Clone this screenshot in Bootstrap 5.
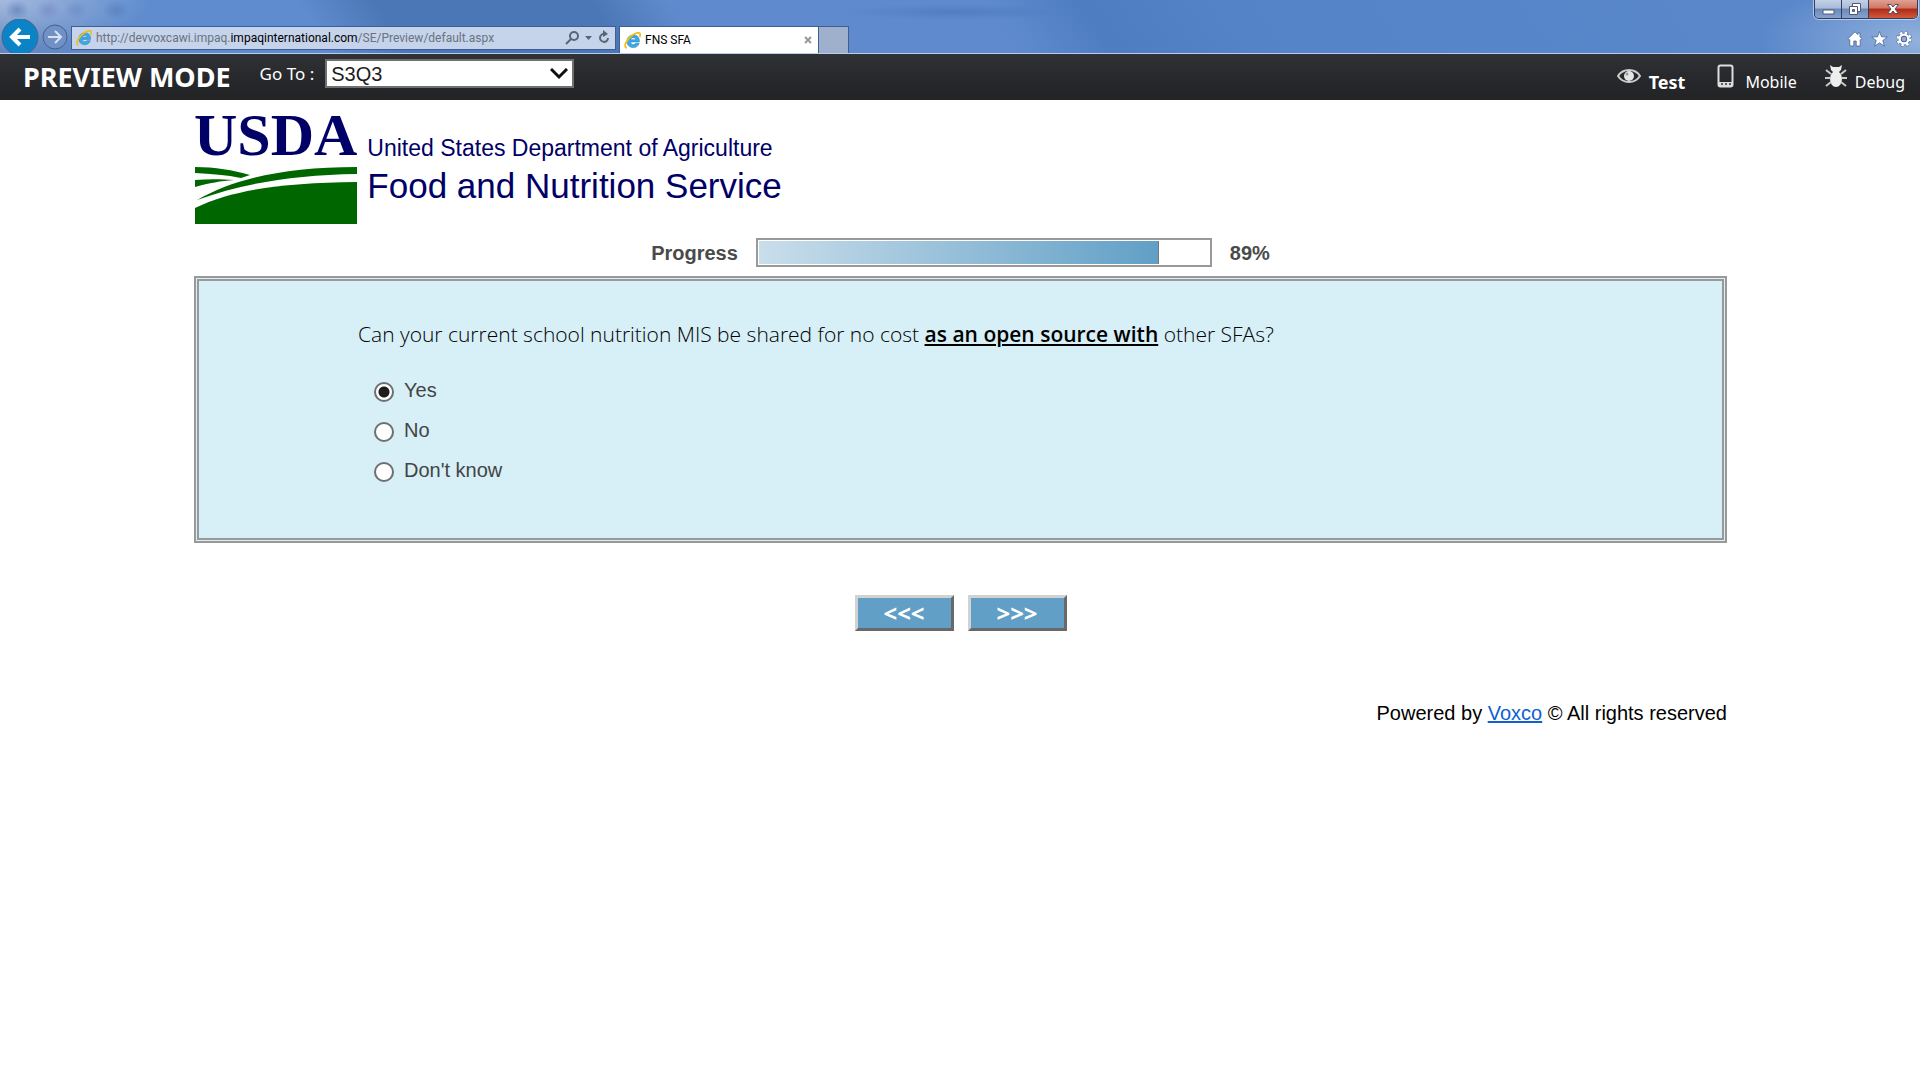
<!DOCTYPE html>
<html lang="en">
<head>
<meta charset="utf-8">
<meta name="viewport" content="width=device-width, initial-scale=1">
<title>FNS SFA</title>
<link rel="stylesheet" href="https://cdn.jsdelivr.net/npm/bootstrap@5.3.0/dist/css/bootstrap.min.css">
<style>
  body { font-family: "Liberation Sans", Arial, sans-serif; font-size: 20px; line-height: 24px; color: #000; background: #fff; }
  svg { display: block; flex: none; }

  /* browser frame */
  .glass { height: 54px; border-bottom: 1px solid #b9cdf0; font-family: Roboto, "Open Sans", sans-serif; font-size: 12px; line-height: 16px;
    background:
      radial-gradient(ellipse 110px 8px at 955px 12px, rgba(58,98,170,.35), transparent),
      radial-gradient(ellipse 12px 10px at 17px 10px, rgba(80,115,180,.55), transparent),
      radial-gradient(ellipse 12px 10px at 48px 10px, rgba(110,120,190,.45), transparent),
      radial-gradient(ellipse 12px 10px at 76px 10px, rgba(90,125,185,.4), transparent),
      radial-gradient(ellipse 14px 10px at 116px 10px, rgba(80,115,180,.5), transparent),
      radial-gradient(ellipse 160px 60px at 100% 40px, rgba(185,205,232,.6), transparent),
      radial-gradient(ellipse 150px 50px at 0 0, rgba(200,213,236,.65), transparent),
      linear-gradient(55deg, #6486bd 0, #5f8ccf 8%, #5f8ccf 17%, #4c77b6 21%, #4c77b6 32%, #5f8bce 36%, #5f8bce 52%, #4f7dc2 57%, #5684c8 66%, #5a88cb 100%); }
  .navcircles { width: 71px; height: 34px; }
  .addressbar { width: 545px; height: 24px; margin-bottom: 3px; padding: 0 4px; border: 1px solid #3f5f94; background: #c5d3eb; color: #6b7280; }
  .addressbar b { font-weight: 400; color: #000; }
  .chrometab { width: 200px; height: 27px; margin-left: 3px; border: 1px solid #3f5f94; border-bottom: 0; background: #fff; color: #000; }
  .newtab { width: 30px; height: 27px; border: 1px solid #3f5f94; border-left: 0; border-bottom: 0; background: #9fb0cc; }
  .plainbtn { border: 0; padding: 0; background: none; }
  .winbtns { height: 19px; margin-right: 2px; border: 1px solid #2d3f63; border-top: 0; border-radius: 0 0 5px 5px; overflow: hidden; box-shadow: 0 0 0 1px rgba(255,255,255,.5); }
  .winbtns button { border: 0; padding: 0; height: 18px; width: 27px; background: linear-gradient(#c3d0e6 0, #a9bbd9 45%, #6b88b8 50%, #86a3cf 100%); border-right: 1px solid #2d3f63; display: flex; align-items: center; justify-content: center; }
  .winbtns .shut { width: 48px; border-right: 0; background: linear-gradient(#dfa193 0, #cf7564 45%, #b02a14 50%, #cf5b3c 100%); }

  /* preview toolbar */
  .previewbar { height: 46px; padding: 0 15px 0 23px; background: linear-gradient(#303236, #26272a 60%, #232426); color: #fff; font-family: "Noto Sans", sans-serif; font-size: 17px; }
  .previewbar h1 { font-size: 27px; line-height: 30px; font-weight: 700; }
  .previewbar a { color: #fff; text-decoration: none; font-size: 16px; }
  .previewbar a.fw-bold { font-size: 18px; }
  .goto { gap: 11px; padding: 5px 0 0 5px; }
  .gotobox { width: 249px; height: 29px; padding: 0 4px; border: 2px solid #707070; border-radius: 0; color: #1c1c1c;
    font: 20px/24px "Liberation Sans", sans-serif; background: #fff url("data:image/svg+xml,%3Csvg xmlns='http://www.w3.org/2000/svg' viewBox='0 0 18 12'%3E%3Cpath d='M1 1l8 8 8-8' fill='none' stroke='%23111' stroke-width='3'/%3E%3C/svg%3E") no-repeat right 4px center / 18px 12px; }

  /* survey */
  .survey { width: 80%; padding: 0 1px 0 2px; }
  .usda { color: #000066; font-family: "Liberation Serif", serif; font-weight: 700; font-size: 60px; line-height: 54px; padding-bottom: 4px; }
  .agency { color: #000066; padding: 24px 0 0 10px; }
  .agency .dept { font-size: 23px; line-height: 32px; }
  .agency .service { font-size: 35px; line-height: 44px; }
  .meterline { gap: 18px; font-weight: 700; color: #4a4a4a; margin: 14px 0 9px; }
  .meter { width: 456px; height: 29px; padding: 1px; border: 2px solid #999; border-radius: 0; background: #fff; }
  .meter .progress-bar { background: linear-gradient(90deg, #c9deeb, #619fc6); border-right: 1px solid #777; }
  .question { border: 5px double #999; background: #d7eff6; padding: 37px 159px 40px; }
  .question legend { margin-bottom: 28px; font-family: "Open Sans", sans-serif; font-weight: 300; font-size: 21px; line-height: 32px; }
  .question legend u { font-weight: 600; }
  .choice { min-height: 40px; gap: 10px; color: #444; }
  .choice input { appearance: none; width: 20px; height: 20px; margin: 4px 0 0; border: 2px solid #6e6e6e; border-radius: 50%; background: #fff; }
  .choice input:checked { background: radial-gradient(circle, #1c1c1c 0 5px, #fff 6px); }
  .steps { gap: 14px; }
  .stepbtn { width: 99px; height: 36px; padding: 0; border: 3px solid; border-color: #d2d2d2 #696969 #696969 #d2d2d2; background: #629fc6; color: #fff; font: 700 24px/24px "Noto Sans", sans-serif; }
  .credit { margin-top: 70px; }
  .credit a { color: #0b62d0; }
</style>
<script src="https://cdn.jsdelivr.net/npm/bootstrap@5.3.0/dist/js/bootstrap.bundle.min.js"></script>
</head>
<body>
<svg width="0" height="0" class="position-absolute" aria-hidden="true">
  <symbol id="ie" viewBox="0 0 16 16">
    <path d="M14.500 9.400H6.200c.1 1.500 1.100 2.400 2.700 2.400 1 0 1.700-.4 2.100-1.100h3.300c-.8 2.500-2.800 4-5.500 4-3.600 0-6-2.300-6-5.900 0-3.500 2.500-6 6-6 3.800 0 6 2.500 5.700 6.600zM6.200 7.300h5c-.1-1.200-1-2-2.400-2s-2.400.8-2.600 2z" fill="#3fa9e2" stroke="#1c7fc0" stroke-width=".5"/>
    <path d="M2.500 15.200C-.9 13.600 2.600 6.800 7.500 3.300c3.600-2.700 6.900-3.200 7.600-1.600.4.900.1 2-.4 3" fill="none" stroke="#f3bd1a" stroke-width="1.700"/>
  </symbol>
</svg>

<header class="glass d-flex align-items-end">
  <div class="navcircles">
    <svg width="71" height="34" viewBox="0 0 71 34" role="img" aria-label="Back and forward">
      <circle cx="20" cy="18" r="18" fill="#0a84c6" stroke="#44638f"/>
      <path d="M30 18H12m8-8l-8 8 8 8" fill="none" stroke="#fff" stroke-width="4"/>
      <circle cx="55" cy="18" r="12" fill="#7090c6" stroke="#44608f" stroke-width="1"/>
      <path d="M48 18h13m-6-6l6 6-6 6" fill="none" stroke="#d8e2f2" stroke-width="2"/>
    </svg>
  </div>
  <div class="addressbar d-flex align-items-center">
    <svg width="16" height="16"><use href="#ie"/></svg>
    <div class="flex-grow-1 ps-1 text-nowrap" role="textbox" aria-label="Address">http://devvoxcawi.impaq.<b>impaqinternational.com</b>/SE/Preview/default.aspx</div>
    <svg width="46" height="16" viewBox="0 0 46 16" fill="none" stroke="#5a6475" stroke-width="2">
      <circle cx="9" cy="6" r="4"/><path d="M6 9l-5 5"/><path d="M20 6h7l-3.500 4z" fill="#5a6475" stroke="none"/>
      <path d="M43 8a4 4 0 1 1-3-4"/><path d="M38 0l5 4-5 3z" fill="#5a6475" stroke="none"/>
    </svg>
  </div>
  <div class="chrometab d-flex align-items-center ps-1 pe-1">
    <svg width="17" height="17"><use href="#ie"/></svg>
    <span class="ps-1 flex-grow-1">FNS SFA</span>
    <button class="plainbtn" aria-label="Close tab"><svg width="12" height="12" viewBox="0 0 12 12" stroke="#999" stroke-width="2"><path d="M3 3l6 6M9 3l-6 6"/></svg></button>
  </div>
  <div class="newtab"></div>
  <div class="ms-auto align-self-start d-flex flex-column align-items-end">
    <div class="winbtns d-flex">
      <button aria-label="Minimize"><svg width="13" height="12" viewBox="0 0 13 12"><path d="M1 7h11v4H1z" fill="#fff" stroke="#4c5a78"/></svg></button>
      <button aria-label="Restore"><svg width="14" height="14" viewBox="0 0 14 14" fill="#fff" stroke="#4c5a78"><path d="M4.500 1.500h8v8h-8z"/><path d="M1.500 4.500h8v8h-8z"/><path d="M4.500 7.500h2v2h-2z" fill="#6b88b8"/></svg></button>
      <button class="shut" aria-label="Close"><svg width="14" height="12" viewBox="0 0 14 12"><path d="M1.500 1.500h3.500l2 2.500 2-2.500h3.500L9 6l3.500 4.500H9L7 8l-2 2.500H1.500L5 6z" fill="#fff" stroke="#5a4a58"/></svg></button>
    </div>
    <div class="d-flex gap-2 pt-2 me-2 mt-1">
      <button class="plainbtn" aria-label="Home"><svg width="16" height="16" viewBox="0 0 16 16"><path d="M8 .8L.8 8l1.200 1.200.8-.6V15h4v-5h2.400v5h4V8.600l.8.600L15.200 8 13 5.800V2h-2.200v1.600z" fill="#fff" stroke="#4a6596" stroke-width=".8"/></svg></button>
      <button class="plainbtn" aria-label="Favorites"><svg width="17" height="16" viewBox="0 0 17 16"><path d="M8.500.5l2 5.300 5.800.2-4.500 3.500 1.600 5.600-4.900-3.200-4.900 3.200 1.600-5.600L.7 6l5.800-.2z" fill="#fff" stroke="#4a6596" stroke-width=".8"/></svg></button>
      <button class="plainbtn" aria-label="Tools"><svg width="16" height="16" viewBox="0 0 16 16" fill="none"><circle cx="8" cy="8" r="6.300" stroke="#4a6596" stroke-width="3.400" stroke-dasharray="2.800 2.150"/><circle cx="8" cy="8" r="4.300" stroke="#4a6596" stroke-width="4"/><circle cx="8" cy="8" r="6.300" stroke="#fff" stroke-width="2.400" stroke-dasharray="2.400 2.550"/><circle cx="8" cy="8" r="4.400" stroke="#fff" stroke-width="2.400"/></svg></button>
    </div>
  </div>
</header>

<nav class="previewbar d-flex align-items-start">
  <h1 class="m-0 pt-2">PREVIEW MODE</h1>
  <div class="goto d-flex align-items-center ms-4">
    <label for="goto" class="text-nowrap">Go To :</label>
    <select id="goto" class="form-select gotobox"><option>S3Q3</option></select>
  </div>
  <div class="d-flex ms-auto pt-2 gap-4">
    <a href="#" class="d-flex align-items-start gap-2 fw-bold">
      <svg width="24" height="24" viewBox="0 0 24 24"><path d="M1 14c5-8 17-8 22 0-5 8-17 8-22 0z" fill="none" stroke="#ccc" stroke-width="2"/><circle cx="12" cy="14" r="5" fill="#e4e4e4"/><circle cx="10" cy="12" r="1.500" fill="#999"/></svg><span class="pt-2">Test</span></a>
    <a href="#" class="d-flex align-items-start gap-2 ms-2">
      <svg width="20" height="26" viewBox="0 0 20 26"><rect x="1.500" y="3.500" width="14" height="21" rx="2" fill="none" stroke="#ddd" stroke-width="2"/><path d="M2 20h13v4H2z" fill="#ddd"/><path d="M4 22h2m2 0h2m2 0h2" stroke="#333" stroke-width="1.500"/></svg><span class="pt-2">Mobile</span></a>
    <a href="#" class="d-flex align-items-start gap-2 ms-1">
      <svg width="22" height="26" viewBox="0 0 22 26"><path d="M6 8l-1-5 3 2h6l3-2-1 5-2 2H8z" fill="#eee"/><ellipse cx="11" cy="17" rx="6" ry="8" fill="#eee"/><path d="M6 12L1 8m15 4l5-4M6 16H0m16 0h6M6 20l-5 4m15-4l5 4" stroke="#ccc" stroke-width="2" fill="none"/></svg><span class="pt-2">Debug</span></a>
  </div>
</nav>

<main class="survey mx-auto">
  <div class="d-flex pt-2">
    <div>
      <div class="usda">USDA</div>
      <svg width="163" height="58" viewBox="0 0 163 58" aria-hidden="true">
        <g fill="#006600"><path d="M1 1c20 0 38 3 55 8l-9 3C33 9 17 8 1 7z"/><path d="M1 14c13-1 25-1 39 0-14 1-24 3-39 7z"/><path d="M3 34C40 13 90 1 163 1v7C100 9 50 17 3 34z"/><path d="M1 42C40 23 90 17 163 16v42H1z"/></g>
      </svg>
    </div>
    <div class="agency">
      <div class="dept">United States Department of Agriculture</div>
      <div class="service">Food and Nutrition Service</div>
    </div>
  </div>

  <div class="meterline d-flex justify-content-center align-items-center">
    <span>Progress</span>
    <div class="progress meter" role="progressbar" aria-label="Progress" aria-valuenow="89" aria-valuemin="0" aria-valuemax="100"><div class="progress-bar" style="width:89%"></div></div>
    <span>89%</span>
  </div>

  <form>
    <fieldset class="question">
      <legend>Can your current school nutrition MIS be shared for no cost <u>as an open source with</u> other SFAs?</legend>
      <div class="ps-3">
        <div class="choice d-flex"><input type="radio" name="share" id="a1" checked><label for="a1">Yes</label></div>
        <div class="choice d-flex"><input type="radio" name="share" id="a2"><label for="a2">No</label></div>
        <div class="choice d-flex"><input type="radio" name="share" id="a3"><label for="a3">Don't know</label></div>
      </div>
    </fieldset>
    <div class="steps d-flex justify-content-center pt-5 mt-1">
      <button type="button" class="stepbtn">&lt;&lt;&lt;</button>
      <button type="button" class="stepbtn">&gt;&gt;&gt;</button>
    </div>
  </form>
  <footer class="credit text-end">Powered by <a href="#">Voxco</a> © All rights reserved</footer>
</main>
</body>
</html>
